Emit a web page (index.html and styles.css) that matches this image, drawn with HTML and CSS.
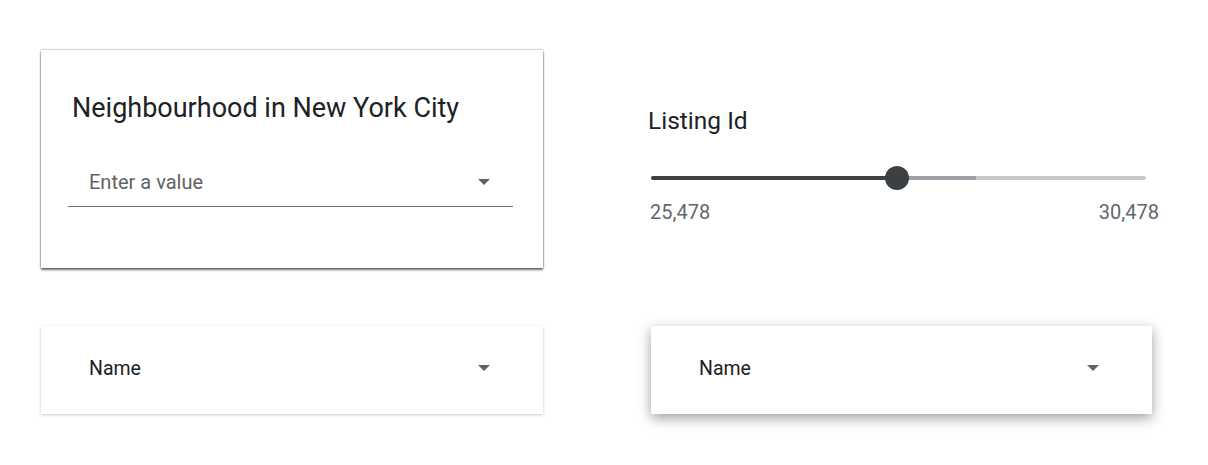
FILE: index.html
```html
<!DOCTYPE html>
<html lang="en">

<head>
    <meta charset="UTF-8">
    <meta name="viewport" content="width=device-width, initial-scale=1.0">
    <title>Listings Filters</title>
    <link rel="stylesheet" href="styles.css">
</head>

<body>

    <div class="filters">
        <div class="card card-raised">
            <h2 class="card-title">Neighbourhood in New York City</h2>
            <div class="dropdown underlined">
                <span class="placeholder">Enter a value</span>
                <span class="caret"></span>
            </div>
        </div>

        <div class="range">
            <h3 class="range-title">Listing Id</h3>
            <div class="track">
                <div class="track-fill" style="width: 49.7%;"></div>
                <div class="track-buffer" style="width: 16%;"></div>
                <div class="thumb" style="left: 49.7%;"></div>
            </div>
            <div class="range-labels">
                <span>25,478</span>
                <span>30,478</span>
            </div>
        </div>

        <div class="card card-flat select-card">
            <span class="select-text">Name</span>
            <span class="caret"></span>
        </div>

        <div class="card card-lifted select-card shifted">
            <span class="select-text">Name</span>
            <span class="caret"></span>
        </div>
    </div>

</body>

</html>
```

FILE: styles.css
```css
body,
html {
    margin: 0;
    padding: 0;
    min-height: 100vh;
    background: #fff;
    font-family: Roboto, "Noto Sans", Arial, sans-serif;
    color: #202124;
}

.filters {
    display: grid;
    grid-template-columns: 502px 505px;
    grid-template-rows: 218px 88px;
    column-gap: 105px;
    row-gap: 58px;
    padding: 50px 0 40px 41px;
}

.card {
    background: #fff;
    box-sizing: border-box;
}

.card-raised {
    padding: 43px 30px 0 27px;
    box-shadow: 0 2px 2px rgba(0, 0, 0, 0.55), 0 0 2px rgba(0, 0, 0, 0.45);
}

.card-flat {
    box-shadow: 0 1px 3px rgba(0, 0, 0, 0.22);
}

.card-lifted {
    box-shadow: 0 4px 12px rgba(0, 0, 0, 0.38);
}

.card-title {
    margin: 0 0 35px 4px;
    font-size: 27px;
    line-height: 30px;
    font-weight: 400;
    color: #202124;
}

.dropdown {
    display: flex;
    align-items: center;
    justify-content: space-between;
    height: 49px;
    padding: 0 23px 0 21px;
    box-sizing: border-box;
}

.underlined {
    border-bottom: 1px solid #70757a;
}

.placeholder {
    font-size: 20px;
    color: #5f6368;
}

.caret {
    width: 0;
    height: 0;
    border-left: 6px solid transparent;
    border-right: 6px solid transparent;
    border-top: 6px solid #5f6368;
}

/* slider */
.range {
    padding-top: 57px;
}

.range-title {
    margin: 0 0 41px 0;
    font-size: 24.5px;
    line-height: 28px;
    font-weight: 400;
    color: #202124;
}

.track {
    position: relative;
    height: 4px;
    margin: 0 7px 0 3px;
    border-radius: 2px;
    background: #c4c7cb;
    display: flex;
}

.track-fill {
    height: 100%;
    background: #3c4043;
    border-radius: 2px 0 0 2px;
}

.track-buffer {
    height: 100%;
    background: #9aa0a6;
}

.thumb {
    position: absolute;
    top: 50%;
    width: 24px;
    height: 24px;
    border-radius: 50%;
    background: #3c4043;
    transform: translate(-50%, -50%);
}

.range-labels {
    display: flex;
    justify-content: space-between;
    margin: 20px -6px 0 2px;
    font-size: 20px;
    color: #5f6770;
}

.select-card {
    display: flex;
    align-items: center;
    justify-content: space-between;
    padding: 0 53px 4px 48px;
}

.shifted {
    margin-left: 3px;
    width: 501px;
}

.select-text {
    font-size: 19.5px;
    color: #202124;
}
```
